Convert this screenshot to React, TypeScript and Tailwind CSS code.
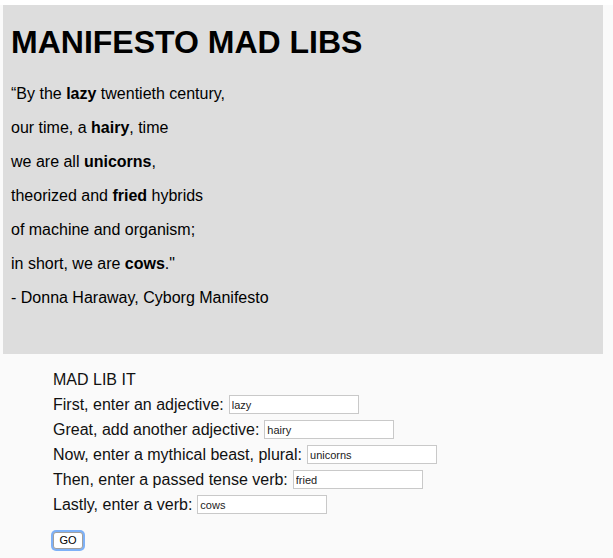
import { useState } from 'react';

// Mad lib prompts, in the order they're shown in the form
const prompts = [
  { key: 'adj1', label: 'First, enter an adjective:' },
  { key: 'adj2', label: 'Great, add another adjective:' },
  { key: 'beast', label: 'Now, enter a mythical beast, plural:' },
  { key: 'verbPast', label: 'Then, enter a passed tense verb:' },
  { key: 'verb', label: 'Lastly, enter a verb:' },
] as const;

type Words = Record<(typeof prompts)[number]['key'], string>;

function Manifesto({ words }: { words: Words }) {
  return (
    <div className="ml-[3px] mt-[5px] h-[349px] w-[600px] bg-[#dddddd] pl-2 pt-[19px] text-black">
      <h1 className="mb-[24px] text-[32px] font-bold leading-[37px]">MANIFESTO MAD LIBS</h1>
      <div className="flex flex-col gap-4 text-base leading-[18px]">
        <p>
          “By the <b>{words.adj1}</b> twentieth century,
        </p>
        <p>
          our time, a <b>{words.adj2}</b>, time
        </p>
        <p>
          we are all <b>{words.beast}</b>,
        </p>
        <p>
          theorized and <b>{words.verbPast}</b> hybrids
        </p>
        <p>of machine and organism;</p>
        <p>
          in short, we are <b>{words.verb}</b>."
        </p>
        <p>- Donna Haraway, Cyborg Manifesto</p>
      </div>
    </div>
  );
}

export default function App() {
  const [words, setWords] = useState<Words>({
    adj1: 'lazy',
    adj2: 'hairy',
    beast: 'unicorns',
    verbPast: 'fried',
    verb: 'cows',
  });

  return (
    <div
      className="min-h-screen bg-[#fafafa] text-black"
      style={{ fontFamily: '"Liberation Sans", Arial, sans-serif' }}
    >
      <Manifesto words={words} />

      {/* Form section */}
      <div className="ml-[53px] mt-[13px] flex flex-col text-base text-[#111]">
        <div className="flex h-[25px] items-center">MAD LIB IT</div>
        {prompts.map((p) => (
          <div key={p.key} className="flex h-[25px] items-center gap-[5px]">
            <span>{p.label}</span>
            <input
              value={words[p.key]}
              onChange={(e) => setWords({ ...words, [p.key]: e.target.value })}
              className="h-[19px] w-[130px] border border-[#c9c9c9] bg-white px-[2px] text-[11px] text-[#222] outline-none"
            />
          </div>
        ))}
        <div className="mt-[10px]">
          <button className="h-[17px] w-[30px] rounded-[3px] border border-[#a0a0a0] bg-white text-[11px] leading-none text-black ring-2 ring-[#7eb1f7]">
            GO
          </button>
        </div>
      </div>
    </div>
  );
}
